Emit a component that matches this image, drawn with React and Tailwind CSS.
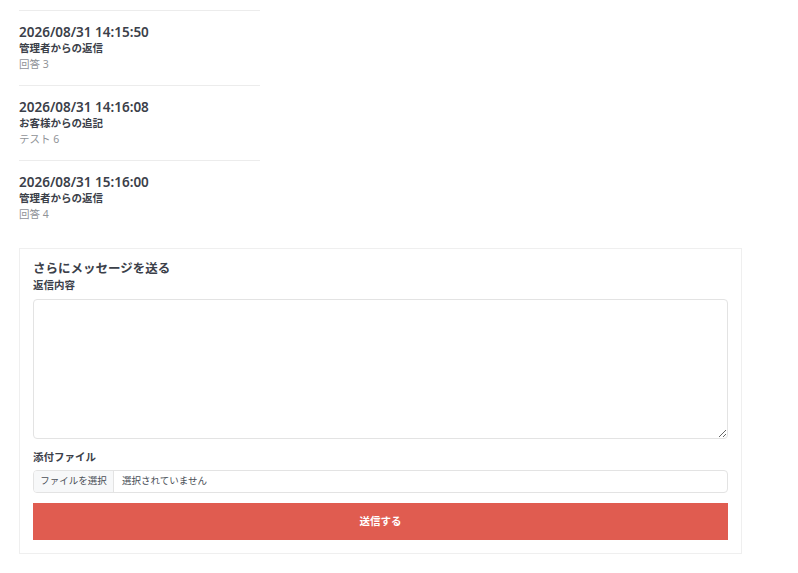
import React from "react";

const messages = [
  { date: "2026/08/31 14:15:50", title: "管理者からの返信", body: "回答 3" },
  { date: "2026/08/31 14:16:08", title: "お客様からの追記", body: "テスト 6" },
  { date: "2026/08/31 15:16:00", title: "管理者からの返信", body: "回答 4" },
];

export default function App() {
  return (
    <div
      className="min-h-screen bg-white pt-[10px] pl-[19px] text-[#3b4049]"
      style={{ fontFamily: '"Noto Sans", "Noto Sans CJK JP", sans-serif' }}
    >
      <div className="w-[241px]">
        {messages.map((m, i) => (
          <div key={i} className="border-t border-[#ececec] pt-[13px] pb-[13px]">
            <div className="text-[13.5px] leading-[16px] font-semibold">{m.date}</div>
            <div className="text-[10.5px] leading-[16px] font-bold">{m.title}</div>
            <div className="text-[10.5px] leading-[16px] text-[#909398]">{m.body}</div>
          </div>
        ))}
      </div>

      <div className="mt-[13px] w-[723px] border border-[#efefef] px-[13px] pt-[12px] pb-[13px]">
        <div className="text-[12.5px] leading-[16px] font-semibold">さらにメッセージを送る</div>
        <div className="text-[10.5px] leading-[16px] font-bold">返信内容</div>
        <textarea className="mt-[6px] block h-[140px] w-full rounded-[4px] border border-[#e3e3e3] outline-none" />

        <div className="mt-[10px] text-[10.5px] leading-[16px] font-bold">添付ファイル</div>
        <div className="mt-[5px] flex h-[23px] w-full items-center overflow-hidden rounded-[4px] border border-[#e3e3e3] text-[9.5px]">
          <div className="flex h-full w-[80px] items-center justify-center border-r border-[#e3e3e3] bg-[#f7f8f9] text-[#4a4f57]">
            ファイルを選択
          </div>
          <div className="pl-[8px] text-[#4a4f57]">選択されていません</div>
        </div>

        <button className="mt-[10px] flex h-[37px] w-full items-center justify-center bg-[#e05c50] text-[10.5px] font-bold text-white">
          送信する
        </button>
      </div>
    </div>
  );
}
